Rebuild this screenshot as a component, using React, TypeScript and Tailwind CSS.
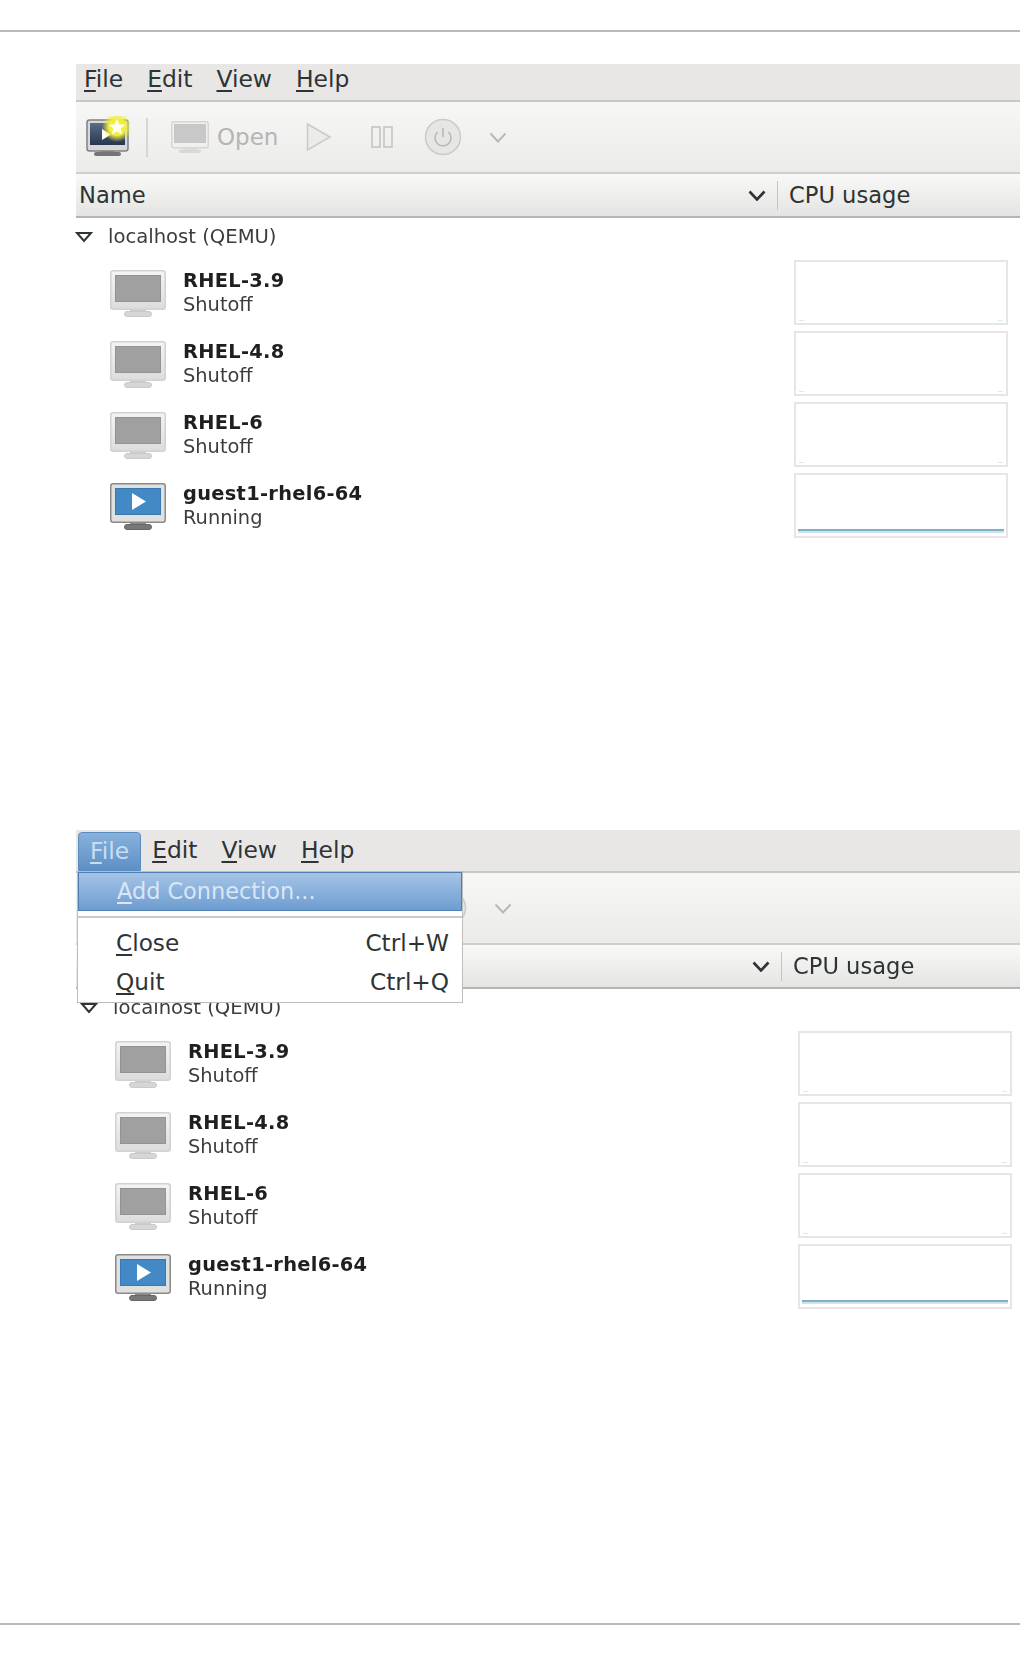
import React from "react";

const font = "font-['DejaVu_Sans',sans-serif]";

function Mnemonic({ k, rest }: { k: string; rest: string }) {
  return (
    <span>
      <span className="underline decoration-[2px] underline-offset-[3px]">{k}</span>
      {rest}
    </span>
  );
}

function Monitor({ running }: { running?: boolean }) {
  return (
    <svg width="56" height="48" viewBox="0 0 56 48" className="mt-[2px] shrink-0">
      <defs>
        <linearGradient id="mb" x1="0" x2="0" y1="0" y2="1">
          <stop offset="0" stopColor="#f4f4f4" />
          <stop offset="1" stopColor="#dcdcdc" />
        </linearGradient>
      </defs>
      <rect x="20" y="38" width="16" height="5" fill={running ? "#8a8a8a" : "#cccccc"} />
      <rect x="14.5" y="41.5" width="27" height="5" rx="2.5" fill={running ? "#777" : "#d6d6d6"} stroke={running ? "#666" : "#cacaca"} />
      <rect x="0.75" y="0.75" width="54.5" height="38.5" rx="2.5" fill={running ? "#e0e0e0" : "url(#mb)"} stroke={running ? "#8a8a8a" : "#d2d2d2"} strokeWidth="1.5" />
      <rect x="5.5" y="5.5" width="45" height="26" fill={running ? "#4389c6" : "#a0a0a0"} stroke={running ? "#3a78b0" : "#939393"} strokeWidth="1" />
      {running && <path d="M22 10 L36 18.5 L22 27 Z" fill="#ffffff" />}
    </svg>
  );
}

function NewConnectionIcon() {
  return (
    <svg width="44" height="42" viewBox="0 0 44 42">
      <defs>
        <radialGradient id="glow">
          <stop offset="0.55" stopColor="#f2ee3c" />
          <stop offset="1" stopColor="#f2ee3c" stopOpacity="0" />
        </radialGradient>
        <linearGradient id="scr" x1="0" x2="0" y1="0" y2="1">
          <stop offset="0" stopColor="#5a6d85" />
          <stop offset="1" stopColor="#26364e" />
        </linearGradient>
      </defs>
      <rect x="14" y="33" width="14" height="4" fill="#8a8a8a" />
      <rect x="8" y="36" width="27" height="4" rx="2" fill="#757575" />
      <rect x="1" y="4" width="41" height="31" rx="2.5" fill="#d8d8d8" stroke="#808080" strokeWidth="1.5" />
      <rect x="4" y="7" width="35" height="22" fill="url(#scr)" />
      <path d="M16 13 L25 18.5 L16 24 Z" fill="#ffffff" />
      <circle cx="31" cy="11" r="15" fill="url(#glow)" />
      <path d="M31 2.5 L33.4 8.2 L39.5 8.7 L34.8 12.6 L36.3 18.5 L31 15.4 L25.7 18.5 L27.2 12.6 L22.5 8.7 L28.6 8.2 Z" fill="#fdfdf0" />
    </svg>
  );
}

function OpenIcon() {
  return (
    <svg width="38" height="33" viewBox="0 0 38 33">
      <rect x="12" y="26" width="14" height="3" fill="#dedede" />
      <rect x="8" y="28.5" width="22" height="3.5" rx="1.7" fill="#d8d8d8" />
      <rect x="0.75" y="0.75" width="36.5" height="26" rx="2" fill="#f0f0ef" stroke="#d6d6d6" strokeWidth="1.5" />
      <rect x="3.5" y="3.5" width="31" height="18" fill="#c8c8c8" stroke="#c2c2c2" strokeWidth="0.8" />
    </svg>
  );
}

function Chevron({ color, w, h, sw }: { color: string; w: number; h: number; sw: number }) {
  return (
    <svg width={w} height={h} viewBox={`0 0 ${w} ${h}`}>
      <path d={`M1.5 1.5 L${w / 2} ${h - 1.5} L${w - 1.5} 1.5`} fill="none" stroke={color} strokeWidth={sw} />
    </svg>
  );
}

function Row({ name, status, running }: { name: string; status: string; running?: boolean }) {
  return (
    <div className="flex h-[71px] items-center">
      <div className="ml-[34px] w-[73px]">
        <Monitor running={running} />
      </div>
      <div className="flex-1">
        <div className="text-[19.4px] leading-[24px] font-bold tracking-[0.3px] text-[#1f1f1f]">{name}</div>
        <div className="text-[19.4px] leading-[24px] text-[#3a3d3e]">{status}</div>
      </div>
      <div className="mr-[12px] flex h-[65px] w-[214px] flex-col justify-end border-2 border-[#e9e5e6] bg-white p-[1px]">
        {running ? (
          <div className="mx-[1px] mb-[2px] h-[4px] border-t-2 border-[#7fb0c8] bg-[#cfe2ec]" />
        ) : (
          <div className="flex justify-between px-[2px] pb-[1px]">
            <div className="h-[1px] w-[5px] bg-[#d8eaf2]" />
            <div className="h-[1px] w-[5px] bg-[#d8eaf2]" />
          </div>
        )}
      </div>
    </div>
  );
}

function Window({ open }: { open?: boolean }) {
  const shift = open ? "pl-[5px] -mr-[4px]" : "";
  return (
    <div className={`relative ml-[76px] blur-[0.6px] ${font} text-[#2e3436]`}>
      <div className={`flex items-center gap-[24px] border-b-2 border-[#c9c8c6] bg-[#e8e7e6] text-[23.4px] ${open ? "h-[43px] pl-[13px]" : "h-[38px] pb-[4px] pl-[8px]"}`}>
        <span className={open ? "invisible" : ""}><Mnemonic k="F" rest="ile" /></span>
        <Mnemonic k="E" rest="dit" />
        <Mnemonic k="V" rest="iew" />
        <Mnemonic k="H" rest="elp" />
      </div>
      <div className={`flex h-[72px] items-center border-b-2 border-[#cfcecd] bg-gradient-to-b from-[#f7f7f6] to-[#ebebea] ${shift}`}>
        <div className="ml-[10px]"><NewConnectionIcon /></div>
        <div className="ml-[16px] h-[39px] w-[2px] bg-[#d6d6d5]" />
        <div className="ml-[23px]"><OpenIcon /></div>
        <span className="ml-[8px] text-[23px] text-[#b5b5b4]">Open</span>
        <svg width="26" height="30" viewBox="0 0 26 30" className="ml-[28px]">
          <path d="M1.5 2 L24 15 L1.5 28 Z" fill="#ebebea" stroke="#c9c9c8" strokeWidth="1.5" />
        </svg>
        <svg width="22" height="22" viewBox="0 0 22 22" className="ml-[39px]">
          <rect x="1" y="1" width="8" height="20" fill="none" stroke="#c2c2c1" strokeWidth="1.5" />
          <rect x="13" y="1" width="8" height="20" fill="none" stroke="#c2c2c1" strokeWidth="1.5" />
        </svg>
        <svg width="38" height="38" viewBox="0 0 38 38" className="ml-[31px]">
          <circle cx="19" cy="19" r="17.5" fill="#e6e6e5" stroke="#cbcbca" strokeWidth="1.5" />
          <path d="M13.5 14 A8 8 0 1 0 24.5 14 M19 10 L19 19" fill="none" stroke="#b5b5b4" strokeWidth="1.5" />
        </svg>
        <div className="ml-[27px]"><Chevron color="#b8b8b7" w={18} h={11} sw={2} /></div>
      </div>
      <div className={`flex h-[44px] items-center border-b-2 border-[#b6b5b3] bg-gradient-to-b from-[#f9f9f8] to-[#e4e4e3] pt-[1px] text-[22.6px] ${shift}`}>
        <span className="ml-[3px] flex-1">Name</span>
        <Chevron color="#2e3436" w={18} h={11} sw={2.6} />
        <div className="ml-[11px] h-[29px] w-[1px] bg-[#c4c4c3]" />
        <span className="ml-[11px] w-[231px]">CPU usage</span>
      </div>
      <div className={shift}>
        <div className="flex h-[38px] items-center">
          <svg width="18" height="12" viewBox="0 0 18 12" className="ml-[-1px]">
            <path d="M2 2 L16 2 L9 10 Z" fill="#ffffff" stroke="#2e3436" strokeWidth="2" />
          </svg>
          <span className="ml-[15px] text-[19.6px] text-[#3a3d3e]">localhost (QEMU)</span>
        </div>
        <div className="mt-[1px]">
          <Row name="RHEL-3.9" status="Shutoff" />
          <Row name="RHEL-4.8" status="Shutoff" />
          <Row name="RHEL-6" status="Shutoff" />
          <Row name="guest1-rhel6-64" status="Running" running />
        </div>
      </div>
      {open && (
        <>
          <div className="absolute left-[2px] top-[2px] flex h-[39px] w-[63px] items-center rounded-t-[4px] border border-[#5b8cc0] bg-gradient-to-b from-[#88b1dc] to-[#5d90c6] pl-[11px] text-[23.4px] text-[#c9ddf1]">
            <Mnemonic k="F" rest="ile" />
          </div>
          <div className="absolute left-[1px] top-[41px] w-[386px] border border-[#bdbdbc] bg-white text-[23.2px]">
            <div className="flex h-[39px] items-center border border-[#4f7fb3] bg-gradient-to-b from-[#a5c4e7] to-[#6e9dd0] pl-[38px] text-[22.4px] text-[#d9e7f5]">
              <Mnemonic k="A" rest="dd Connection..." />
            </div>
            <div className="mt-[5px] h-[2px] bg-[#c9c9c9]" />
            <div className="mt-[5px] flex h-[40px] items-center justify-between pl-[38px] pr-[13px]">
              <Mnemonic k="C" rest="lose" />
              <span>Ctrl+W</span>
            </div>
            <div className="flex h-[39px] items-center justify-between pl-[38px] pr-[13px]">
              <Mnemonic k="Q" rest="uit" />
              <span>Ctrl+Q</span>
            </div>
          </div>
        </>
      )}
    </div>
  );
}

export default function App() {
  return (
    <div className="h-[1656px] w-[1020px] overflow-hidden bg-white pt-[30px]">
      <div className="h-[2px] bg-[#b9b9b9]" />
      <div className="mt-[32px]"><Window /></div>
      <div className="mt-[289px]"><Window open /></div>
      <div className="mt-[311px] h-[2px] bg-[#b9b9b9]" />
    </div>
  );
}
